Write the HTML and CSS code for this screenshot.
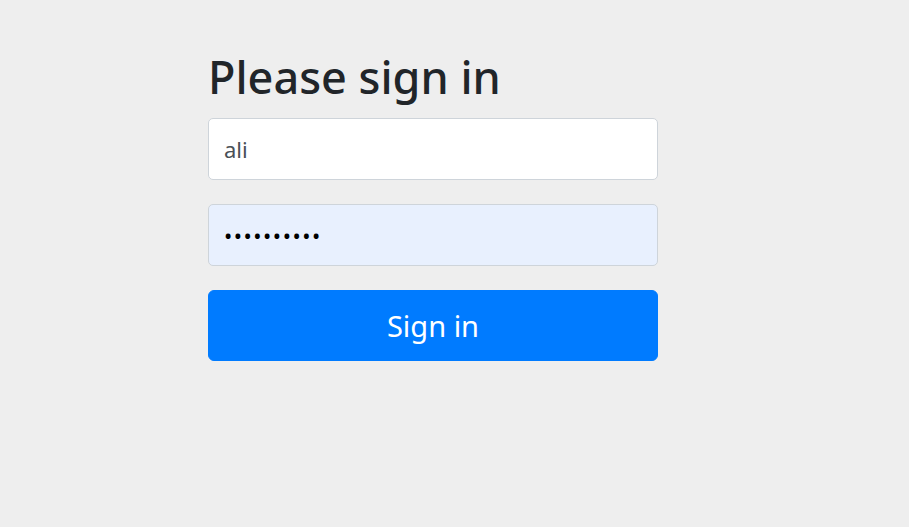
FILE: index.html
```html
<!DOCTYPE html>
<html lang="en">
  <head>
    <meta charset="utf-8" />
    <meta name="viewport" content="width=device-width, initial-scale=1" />
    <title>Please sign in</title>
    <link rel="stylesheet" href="styles.css">
  </head>
  <body>
    <div class="container">
      <form class="form-signin" method="post" action="#">
        <h2 class="form-signin-heading">Please sign in</h2>
        <p class="field">
          <input type="text" id="username" name="username" class="form-control" value="ali" placeholder="Username" />
        </p>
        <p class="field">
          <input type="password" id="password" name="password" class="form-control form-control--filled" value="0123456789" placeholder="Password" />
        </p>
        <button class="btn btn-primary" type="submit">Sign in</button>
      </form>
    </div>
  </body>
</html>
```

FILE: styles.css
```css
body {
  margin: 0;
  background: #eeeeee;
  font-family: "Noto Sans", "Open Sans", sans-serif;
  color: #212529;
}

.container {
  padding: 48px 0 0 208px;
}

.form-signin {
  width: 450px;
  display: flex;
  flex-direction: column;
}

.form-signin-heading {
  margin: 0 0 12px;
  font-size: 45px;
  font-weight: 500;
  line-height: 58px;
}

.field {
  margin: 0 0 24px;
}

.form-control {
  box-sizing: border-box;
  width: 100%;
  height: 62px;
  padding: 0 15px;
  font-family: inherit;
  font-size: 22px;
  color: #495057;
  background: #fff;
  border: 1px solid #ced4da;
  border-radius: 5px;
  outline: none;
}

.form-control--filled {
  background: #e8f0fe;
  color: #000;
  letter-spacing: 1.5px;
}

.btn {
  height: 71px;
  font-family: inherit;
  font-size: 29px;
  color: #fff;
  background: #007bff;
  border: 1px solid #007bff;
  border-radius: 6px;
  cursor: pointer;
}
```
